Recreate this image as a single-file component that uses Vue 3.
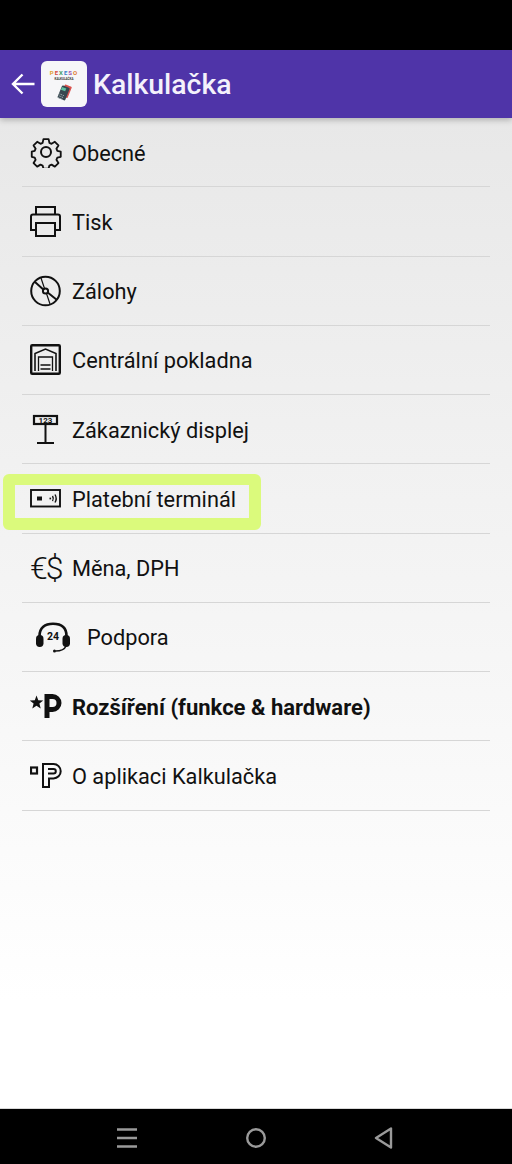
<script setup>
const items = [
  { id: "gear", label: "Obecné" },
  { id: "print", label: "Tisk" },
  { id: "disc", label: "Zálohy" },
  { id: "garage", label: "Centrální pokladna" },
  { id: "display", label: "Zákaznický displej" },
  { id: "terminal", label: "Platební terminál", marked: true },
  { id: "money", label: "Měna, DPH" },
  { id: "support", label: "Podpora", wide: true },
  { id: "star", label: "Rozšíření (funkce & hardware)", bold: true },
  { id: "about", label: "O aplikaci Kalkulačka" },
];

const logoLetters = [
  { ch: "P", color: "#e0a030" },
  { ch: "E", color: "#d8483c" },
  { ch: "X", color: "#3c9a5c" },
  { ch: "E", color: "#3a7fc8" },
  { ch: "S", color: "#9a55b0" },
  { ch: "O", color: "#e07a30" },
];
</script>

<template>
  <div class="screen">
    <div class="status"></div>

    <header class="appbar">
      <svg class="back" width="26" height="26" viewBox="0 0 26 26" fill="none" stroke="#fff" stroke-width="2.4">
        <path d="M24.5 13H3M12.5 3.5 3 13l9.5 9.5" />
      </svg>
      <div class="logo">
        <div class="logo-name">
          <span v-for="(l, i) in logoLetters" :key="i" :style="{ color: l.color }">{{ l.ch }}</span>
        </div>
        <div class="logo-sub">KALKULAČKA</div>
        <svg width="18" height="18" viewBox="0 0 22 24">
          <rect x="9" y="3" width="10" height="16" rx="1" transform="rotate(22 14 11)" fill="#d9534f" />
          <rect x="5" y="4" width="11" height="18" rx="1.5" transform="rotate(22 10 13)" fill="#37474f" />
          <rect x="7.5" y="6" width="6" height="4" transform="rotate(22 10 8)" fill="#5cc0a0" />
          <path d="M5 14.5l6 2.4M4 17l6 2.4M3 19.5l6 2.4" stroke="#cfd8dc" stroke-width="1" stroke-dasharray="1.4 1" />
        </svg>
      </div>
      <h1 class="title">Kalkulačka</h1>
    </header>

    <main class="list">
      <div v-for="item in items" :key="item.id" class="row" :class="{ bold: item.bold, wide: item.wide }">
        <span class="icon">
          <svg v-if="item.id === 'gear'" width="32" height="32" viewBox="0 0 32 32" fill="none" stroke="#111" stroke-width="2" stroke-linejoin="round">
            <path d="M13.2 2h5.6l.9 4.1 2.3 1 3.6-2.2 3.9 3.9-2.2 3.6 1 2.3 3.7.9v5.6l-3.7.9-1 2.3 2.2 3.6-3.9 3.9-3.6-2.2-2.3 1-.9 3.3h-5.6l-.9-3.3-2.3-1-3.6 2.2-3.9-3.9 2.2-3.6-1-2.3-3.2-.9v-5.6l3.2-.9 1-2.3-2.2-3.6 3.9-3.9 3.6 2.2 2.3-1z" transform="translate(1.3 1.3) scale(.92)" />
            <circle cx="16" cy="16" r="5" />
          </svg>

          <svg v-else-if="item.id === 'print'" width="32" height="32" viewBox="0 0 32 32" fill="none" stroke="#111" stroke-width="2">
            <path d="M6 25H1V11.500q0-2 2-2h25q2 0 2 2V25h-5" />
            <path d="M6 9.500V2h19v7.500" />
            <rect x="6" y="18" width="19" height="13" />
          </svg>

          <svg v-else-if="item.id === 'disc'" width="32" height="32" viewBox="0 0 32 32" fill="none" stroke="#111" stroke-width="2">
            <circle cx="15.500" cy="16" r="14.300" />
            <circle cx="15.500" cy="16" r="2.600" />
            <path d="M5 7 13.300 14.500M17.700 17.500 27 25" />
            <path d="M11 3 14.500 13.500M16.500 18.500 20 29" stroke-width="1.200" />
          </svg>

          <svg v-else-if="item.id === 'garage'" width="32" height="32" viewBox="0 0 32 32" fill="none" stroke="#111">
            <rect x="1.200" y="1.200" width="28.600" height="28.600" rx="1" stroke-width="2.400" />
            <path d="M5 27V9.500L15.500 5 26 9.500V27" stroke-width="1.600" />
            <path d="M8.500 27V13h14v14" stroke-width="1.300" />
            <path d="M10.500 21h10M10.500 25h10" stroke-width="1.600" />
          </svg>

          <svg v-else-if="item.id === 'display'" width="32" height="32" viewBox="0 0 32 32" fill="none" stroke="#111" stroke-width="2">
            <rect x="4" y="3" width="23" height="8" stroke-width="2.200" />
            <text x="15.500" y="9.800" class="svg-num" text-anchor="middle">123</text>
            <path d="M15.500 11v19M7 30h17" />
          </svg>

          <svg v-else-if="item.id === 'terminal'" width="32" height="32" viewBox="0 0 32 32" fill="none" stroke="#111">
            <rect x="1" y="8" width="29" height="16.500" stroke-width="1.900" />
            <rect x="7.500" y="15" width="4" height="3" fill="#111" />
            <path d="M19.500 16.500h1.600" stroke-width="1.700" />
            <path d="M22.500 14q1.600 2.500 0 5M25 12.500q2.400 4 0 8" stroke-width="1.400" />
          </svg>

          <span v-else-if="item.id === 'money'" class="money">€$</span>

          <svg v-else-if="item.id === 'support'" width="36" height="32" viewBox="0 0 36 32" fill="none" stroke="#111">
            <path d="M4.500 15C4.500 6.500 10 2.800 18 2.800S31.500 6.500 31.500 15" stroke-width="2.600" />
            <rect x="1" y="14" width="7.500" height="12" rx="3.700" fill="#111" stroke="none" />
            <rect x="27.500" y="14" width="7.500" height="12" rx="3.700" fill="#111" stroke="none" />
            <text x="18" y="19" class="svg-24" text-anchor="middle">24</text>
            <path d="M31 25q-2 5-10.500 5" stroke-width="1.500" />
            <circle cx="19.500" cy="30" r="1.500" fill="#111" stroke="none" />
          </svg>

          <svg v-else-if="item.id === 'star'" width="32" height="32" viewBox="0 0 32 32">
            <path d="M6.500 5.500l1.800 4.800 5 .2-3.900 3.100 1.300 4.900-4.200-2.800-4.200 2.800 1.300-4.900L-.2 10.500l5-.2z" fill="#111" />
            <path d="M17 28V6.500h5.500a6.500 6.500 0 0 1 0 13H17" fill="none" stroke="#111" stroke-width="5" />
          </svg>

          <svg v-else-if="item.id === 'about'" width="32" height="32" viewBox="0 0 32 32" fill="none" stroke="#111" stroke-width="2">
            <rect x="1" y="8.500" width="6" height="6" stroke-width="2.200" />
            <path d="M13 28V5h10.500a7.200 7.200 0 0 1 0 14.400H19V28z" />
            <path d="M18 10h5.500a2.300 2.300 0 0 1 0 4.600H18" />
          </svg>
        </span>
        <span class="label">{{ item.label }}</span>
        <span v-if="item.marked" class="mark"></span>
      </div>
    </main>

    <footer class="navbar">
      <svg width="22" height="22" viewBox="0 0 22 22" stroke="#9a9a9a" stroke-width="2.400">
        <path d="M1 2.500h20M1 11h20M1 19.500h20" />
      </svg>
      <svg width="22" height="22" viewBox="0 0 22 22" fill="none" stroke="#9a9a9a" stroke-width="2.400">
        <circle cx="11" cy="11" r="8.800" />
      </svg>
      <svg width="22" height="22" viewBox="0 0 22 22" fill="none" stroke="#9a9a9a" stroke-width="2.400" stroke-linejoin="round">
        <path d="M18 1.500v19L3 11z" />
      </svg>
    </footer>
  </div>
</template>

<style>
html,
body {
  margin: 0;
  background: #fff;
}
</style>

<style scoped>
.screen {
  width: 512px;
  height: 1164px;
  display: flex;
  flex-direction: column;
  overflow: hidden;
  font-family: Roboto, "Liberation Sans", sans-serif;
  color: #111;
  background: linear-gradient(#e8e8e8 118px, #f2f2f2 500px, #fbfbfb 850px, #fff 1000px);
}

.status {
  height: 50px;
  flex: none;
  background: #000;
}

.appbar {
  height: 68px;
  flex: none;
  display: flex;
  align-items: center;
  padding-left: 10px;
  box-sizing: border-box;
  background: #4f34a8;
  box-shadow: 0 2px 6px rgba(0, 0, 0, 0.25);
  position: relative;
}

.back {
  flex: none;
  margin-right: 5px;
}

.logo {
  width: 46px;
  height: 46px;
  flex: none;
  border-radius: 6px;
  background: #f6f6f8;
  display: flex;
  flex-direction: column;
  align-items: center;
  padding-top: 9px;
  box-sizing: border-box;
  overflow: hidden;
}

.logo-name {
  font-size: 6px;
  font-weight: 700;
  line-height: 6px;
  letter-spacing: 1px;
}

.logo-sub {
  font-size: 3px;
  line-height: 4px;
  font-weight: 700;
  color: #333;
  margin: 1px 0 2px;
}

.title {
  margin: 0 0 0 6px;
  padding-top: 1px;
  font-size: 28.4px;
  font-weight: 500;
  color: #f4f1fb;
}

.list {
  flex: 1;
  padding: 0 22px;
}

.row {
  height: 69.25px;
  box-sizing: border-box;
  border-bottom: 1.5px solid #d6d6d6;
  display: flex;
  align-items: center;
  position: relative;
  font-size: 21.75px;
}

.icon {
  width: 50px;
  flex: none;
  display: flex;
  padding-left: 8px;
  box-sizing: border-box;
}

.row.wide .icon {
  width: 65px;
  padding-left: 13px;
}

.label {
  margin-top: 2px;
}

.row.bold .label {
  font-size: 22px;
  font-weight: 700;
}

.money {
  width: 32px;
  font-size: 32px;
  line-height: 32px;
  font-weight: 300;
  letter-spacing: -2px;
  white-space: nowrap;
}

.svg-num {
  font-family: Roboto, sans-serif;
  font-size: 8px;
  font-weight: 700;
  fill: #111;
  stroke: none;
}

.svg-24 {
  font-family: Roboto, sans-serif;
  font-size: 10.5px;
  font-weight: 700;
  fill: #111;
  stroke: none;
}

.mark {
  position: absolute;
  left: -19px;
  top: 10px;
  width: 258px;
  height: 56px;
  box-sizing: border-box;
  border: solid #dbfa7c;
  border-width: 11px 12px 12px 12px;
  border-radius: 6px;
}

.navbar {
  height: 56px;
  flex: none;
  border-top: 1px solid #d8d8d8;
  box-sizing: border-box;
  background: #000;
  display: flex;
  align-items: center;
  justify-content: space-between;
  padding: 2px 117px 0 116px;
}
</style>
